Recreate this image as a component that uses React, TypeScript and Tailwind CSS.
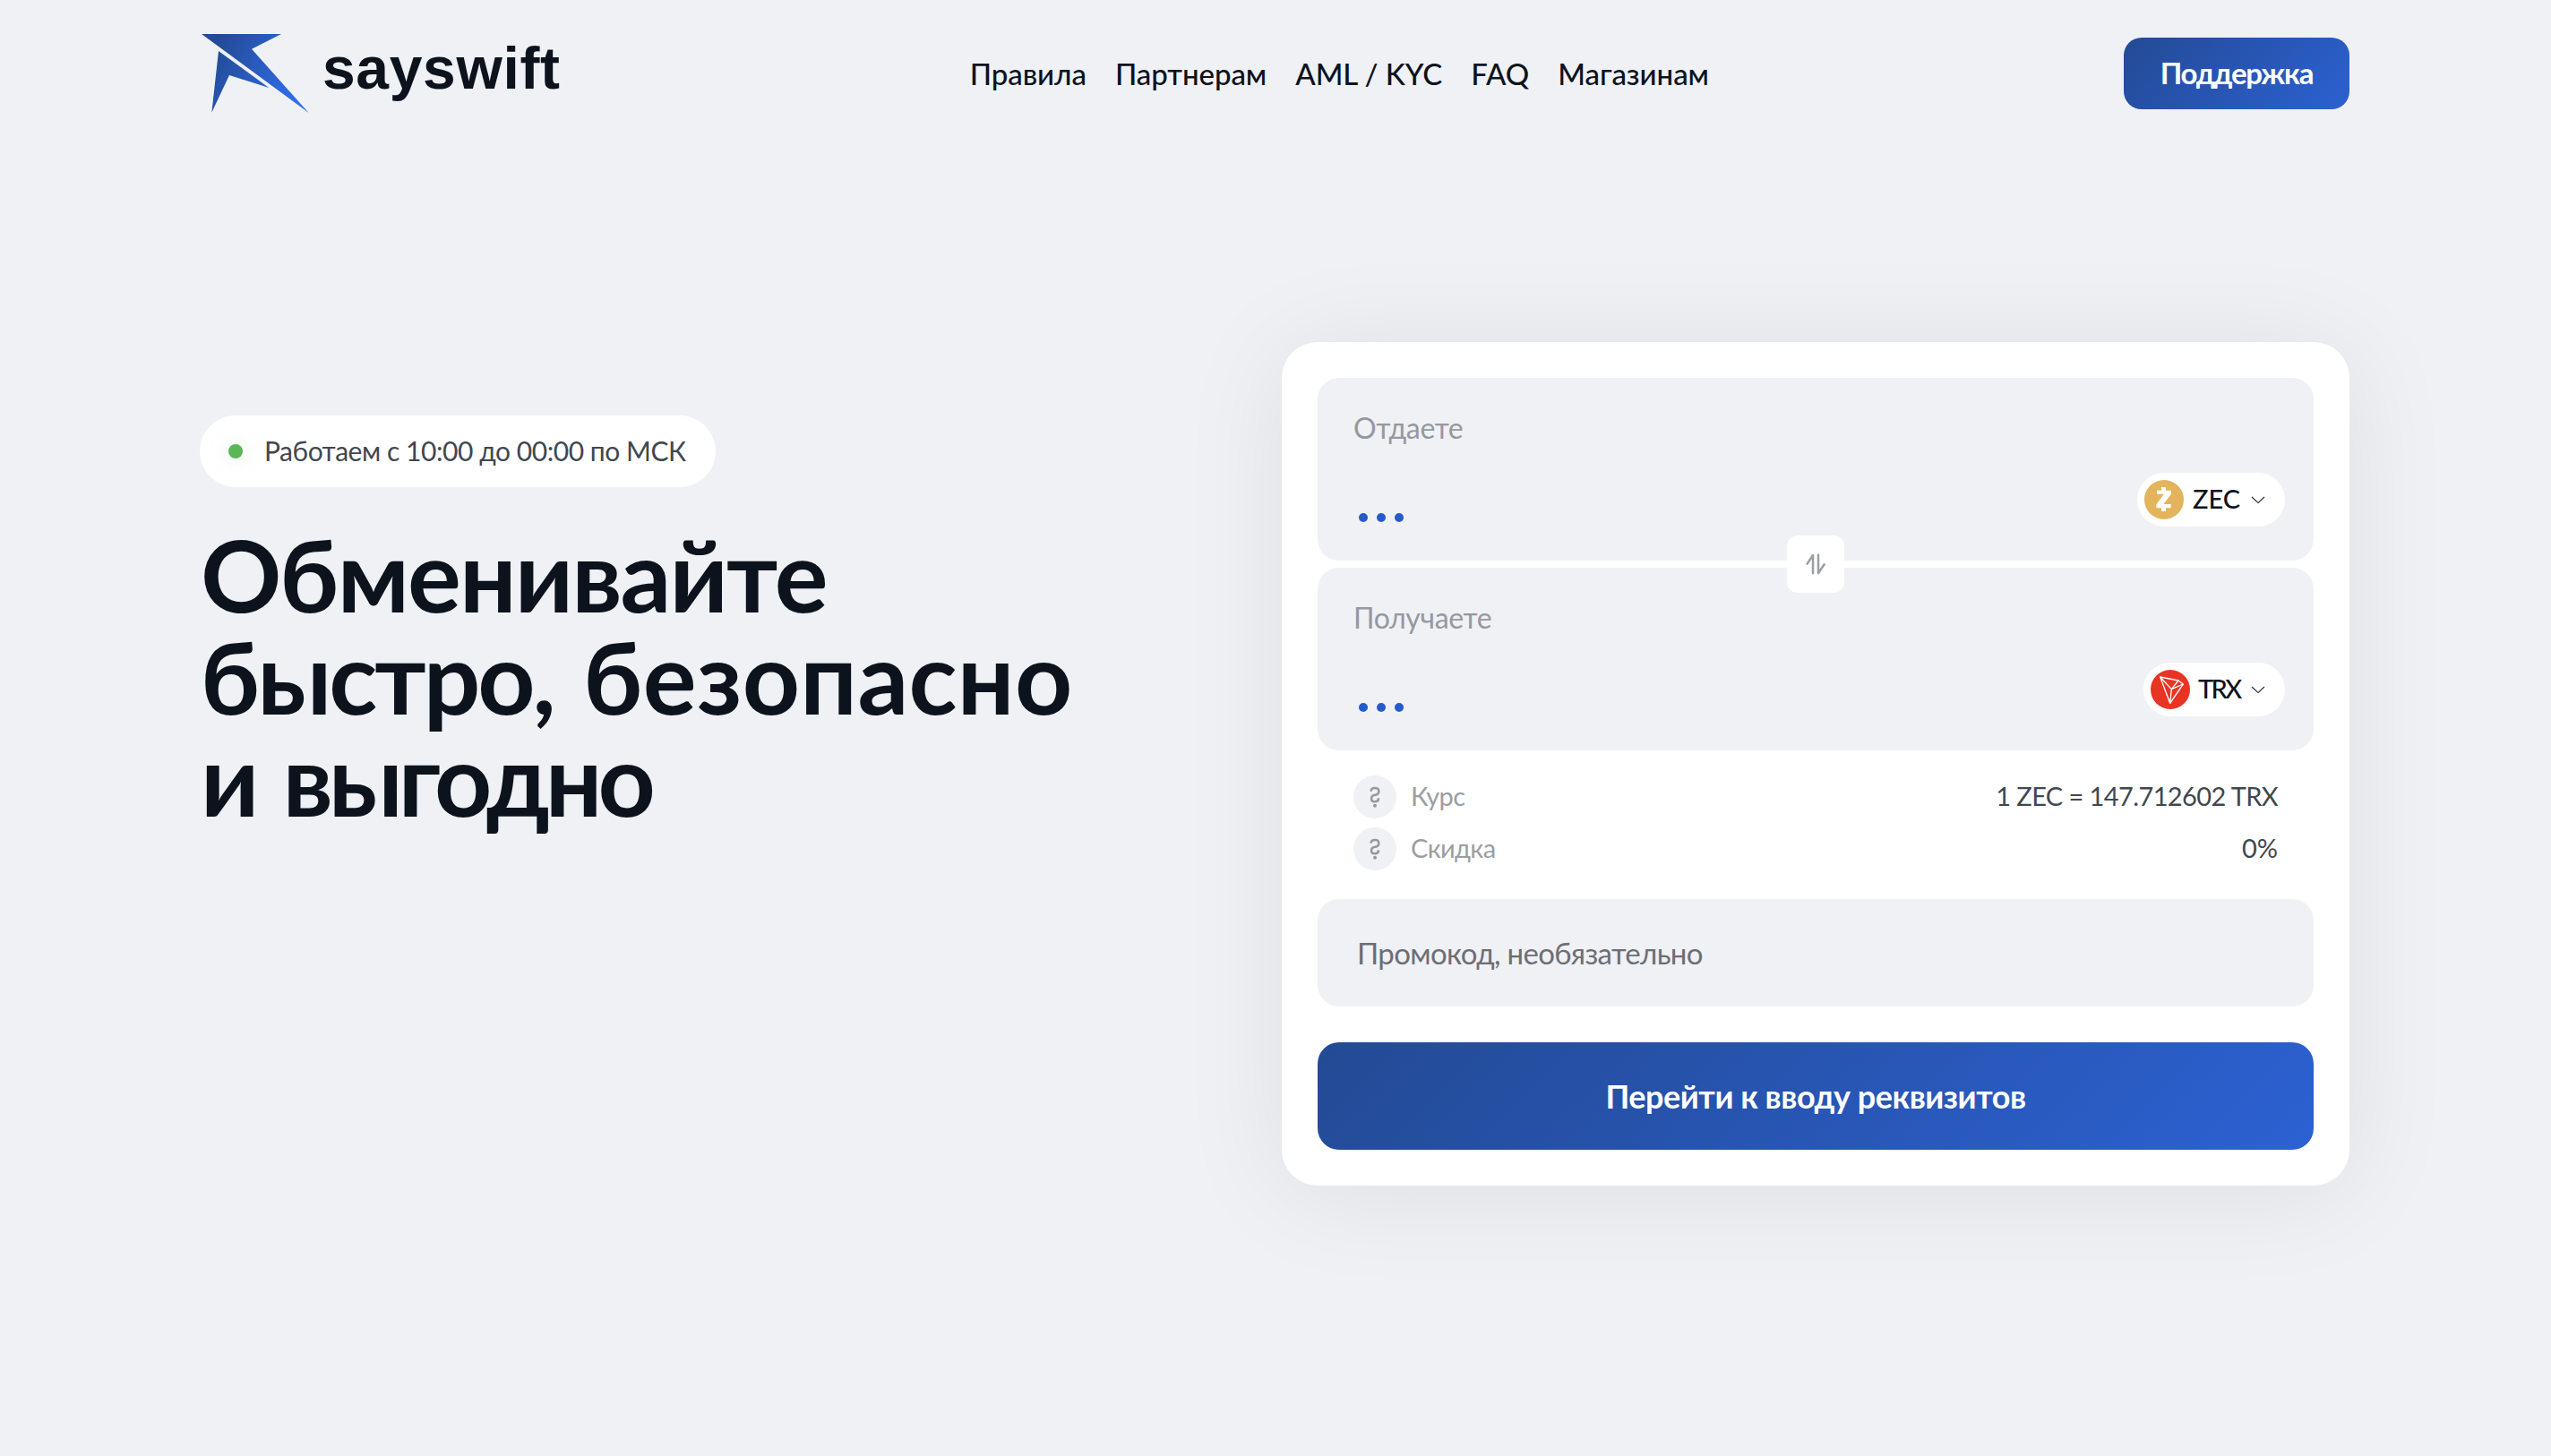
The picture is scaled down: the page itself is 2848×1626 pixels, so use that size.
import React from "react";

const navLinks = ["Правила", "Партнерам", "AML / KYC", "FAQ", "Магазинам"];

const Logo = () => (
  <a href="#" className="flex h-[88px] items-start gap-[15px] pl-0.5">
    <svg width="120" height="88" viewBox="75 53 360 264" fill="url(#logo-gradient)">
      <defs>
        <linearGradient
          id="logo-gradient"
          gradientUnits="userSpaceOnUse"
          x1="90"
          y1="150"
          x2="400"
          y2="300"
        >
          <stop stopColor="#234a94" />
          <stop offset="1" stopColor="#3170f0" />
        </linearGradient>
      </defs>
      <path d="M75 53H342L243 103L434 317Z" />
      <path d="M132 110L301 233L168 191L109 316Z" />
    </svg>
    <span className="font-['Liberation_Sans',sans-serif] text-[66px] leading-[76px] font-bold tracking-[0.65px]">
      sayswift
    </span>
  </a>
);

const ChevronIcon = () => (
  <svg width="16" height="9" viewBox="0 0 16 9" fill="none" stroke="#1b222c" strokeWidth="1.1">
    <path d="M1 1L8 7.6L15 1" />
  </svg>
);

const SwapIcon = () => (
  <svg
    width="22"
    height="24"
    viewBox="168 114 66 72"
    fill="none"
    stroke="#9c9ea2"
    strokeWidth="7.5"
    strokeLinecap="round"
    strokeLinejoin="round"
  >
    <path d="M192 181V120L173 149" />
    <path d="M210 119V180L230 151" />
  </svg>
);

const QuestionIcon = () => (
  <svg width="12" height="24" viewBox="327 711 36 72" fill="none" stroke="#9698a0" strokeWidth="7.5">
    <path d="M332 728C332 720 337 717 345 717S358 720 358 728C358 737 353 739 346 740S333 744 333 752C333 760 338 763 345 763S357 760 357 751" />
    <circle cx="345" cy="776" r="6" fill="#9698a0" stroke="none" />
  </svg>
);

const ZecIcon = () => (
  <svg width="44" height="44" viewBox="162 108 132 132">
    <circle cx="228" cy="174" r="66" fill="#e3b45c" />
    <path
      fill="#fff"
      d="M204 143H219V132H234V143H252V155L226 189H251V202H234V213H219V202H202V190L228 155H204Z"
    />
  </svg>
);

const TrxIcon = () => (
  <svg width="44" height="44" viewBox="183 744 132 132">
    <circle cx="249" cy="810" r="66" fill="#e93323" />
    <g fill="none" stroke="#fff" strokeWidth="4" strokeLinejoin="round">
      <path d="M215 768L276 780L292 792L248 856Z" />
      <path d="M215 768L253 809L248 856" />
      <path d="M276 780L253 809L292 792" />
    </g>
  </svg>
);

const Field = ({ label, children }: { label: string; children: React.ReactNode }) => (
  <div className="flex h-[204px] flex-col rounded-3xl bg-[#eff1f5] pt-9 pr-8 pl-10">
    <span className="text-[32px] leading-10 tracking-[-0.35px] text-[#96989f]">{label}</span>
    <div className="mt-[30px] flex h-[60px] justify-between">
      <div className="mb-[5px] ml-1.5 flex gap-2.5 self-end">
        <i className="size-2.5 rounded-full bg-[#255acb]" />
        <i className="size-2.5 rounded-full bg-[#255acb]" />
        <i className="size-2.5 rounded-full bg-[#255acb]" />
      </div>
      {children}
    </div>
  </div>
);

const RateRow = ({ label, children }: { label: string; children: React.ReactNode }) => (
  <div className="flex h-12 items-center text-[29px]">
    <span className="flex size-12 items-center justify-center rounded-full bg-[#eff1f5]">
      <QuestionIcon />
    </span>
    <span className="ml-4 pb-0.5 tracking-[-0.65px] text-[#9c9ea2]">{label}</span>
    <span className="ml-auto pb-0.5 text-[#414750]">{children}</span>
  </div>
);

const Header = () => (
  <header className="flex h-[164px] items-center justify-between">
    <Logo />
    <nav className="flex gap-8 pt-0.5 pr-1.5 text-[33px] font-medium tracking-[-0.05px]">
      {navLinks.map((label) => (
        <a key={label} href="#">
          {label}
        </a>
      ))}
    </nav>
    <button className="h-20 w-[252px] rounded-[20px] bg-linear-[135deg,#234a94,#2c61d2] text-[33px] font-bold tracking-[-1.2px] text-white">
      Поддержка
    </button>
  </header>
);

const Exchange = () => (
  <div className="w-[1192px] rounded-[40px] bg-white p-10 shadow-[0_8px_120px_rgba(0,0,0,0.08)]">
    <div className="relative flex flex-col gap-2">
      <Field label="Отдаете">
        <button className="flex w-[165px] items-center rounded-full bg-white pl-2 text-[29px] font-medium">
          <ZecIcon />
          <span className="ml-2.5 w-[53px] pb-0.5 text-left">ZEC</span>
          <span className="ml-3">
            <ChevronIcon />
          </span>
        </button>
      </Field>
      <Field label="Получаете">
        <button className="flex w-[158px] items-center rounded-full bg-white pl-2 text-[29px] font-medium tracking-[-2.6px]">
          <TrxIcon />
          <span className="ml-[9px] w-[47px] pb-0.5 text-left">TRX</span>
          <span className="ml-3">
            <ChevronIcon />
          </span>
        </button>
      </Field>
      <button className="absolute top-1/2 left-1/2 flex size-16 -translate-1/2 items-center justify-center rounded-xl bg-white">
        <SwapIcon />
      </button>
    </div>
    <div className="mt-7 flex flex-col gap-2.5 px-10">
      <RateRow label="Курс">
        <span className="tracking-[-0.6px]">1 ZEC = 147.712602 TRX</span>
      </RateRow>
      <RateRow label="Скидка">0%</RateRow>
    </div>
    <div className="mt-8 flex h-[120px] items-center rounded-3xl bg-[#eff1f5] pt-0.5 pl-11 text-[33px] tracking-[-0.65px] text-[#6c6e76]">
      Промокод, необязательно
    </div>
    <button className="mt-10 h-[120px] w-full rounded-3xl bg-linear-[135deg,#234a94,#2c61d2] text-4xl font-bold tracking-[-0.45px] text-white">
      Перейти к вводу реквизитов
    </button>
  </div>
);

const App = () => {
  return (
    <div className="min-h-screen bg-[#eff1f5] font-[Lato,sans-serif] text-[#0c131d]">
      <div className="ml-[223px] w-[2400px]">
        <Header />
        <main className="mt-[218px] flex justify-between">
          <div className="pt-[82px]">
            <div className="flex h-20 w-[576px] items-center gap-6 rounded-full bg-white pl-8">
              <i className="size-4 rounded-full bg-[#5ab656] shadow-[0_0_24px_rgba(90,182,86,0.2)]" />
              <span className="pb-0.5 text-[30px] tracking-[-0.45px] text-[#414750]">
                Работаем с 10:00 до 00:00 по МСК
              </span>
            </div>
            <h1 className="mt-10 pl-px text-[112px] leading-[114px] font-bold">
              <span className="block tracking-[-1.9px]">Обменивайте</span>
              <span className="block tracking-[0.3px] [word-spacing:6px]">
                <span className="tracking-[-3px]">быстро,</span> безопасно
              </span>
              <span className="block tracking-[-5px] [word-spacing:9px]">и выгодно</span>
            </h1>
          </div>
          <Exchange />
        </main>
      </div>
    </div>
  );
};

export default App;
